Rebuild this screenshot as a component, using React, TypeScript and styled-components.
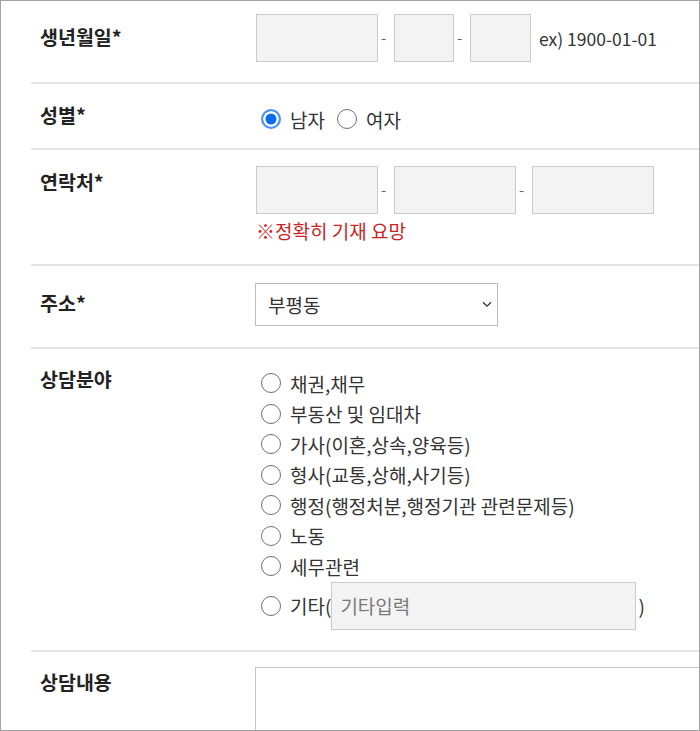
import React from "react";
import styled, { createGlobalStyle } from "styled-components";

const Global = createGlobalStyle`
  html, body { margin: 0; padding: 0; background: #fff; }
  body { font-family: "Noto Sans CJK KR", "Noto Sans", sans-serif; }
  * { box-sizing: border-box; }
`;

const Frame = styled.div`
  width: 700px;
  height: 731px;
  border: 1px solid #a3a3a3;
  overflow: hidden;
  background: #fff;
`;

const Form = styled.div`
  margin-left: 30px;
`;

const Row = styled.div<{ $last?: boolean }>`
  display: grid;
  grid-template-columns: 225px 1fr;
  align-items: start;
  border-bottom: ${(p) => (p.$last ? "none" : "2px solid #e4e4e4")};
`;

const Label = styled.div<{ $pt: number }>`
  padding: ${(p) => p.$pt}px 0 0 9px;
  font-size: 19.5px;
  font-weight: 700;
  line-height: 24px;
  color: #222;
`;

const Field = styled.div<{ $pt: number; $pb: number }>`
  padding: ${(p) => p.$pt}px 0 ${(p) => p.$pb}px 0;
  font-size: 19px;
  color: #333;
  min-width: 0;
`;

const Line = styled.div`
  display: flex;
  align-items: center;
  white-space: nowrap;
`;

const Box = styled.input<{ $w: number }>`
  width: ${(p) => p.$w}px;
  height: 48px;
  flex: none;
  border: 1px solid #cbcbcb;
  background: #f3f3f3;
  padding: 0 8px;
  font: inherit;
  color: #333;
  outline: none;
  &::placeholder { color: #7a7a7a; }
`;

const Dash = styled.span`
  width: 16px;
  flex: none;
  padding-left: 3px;
  font-size: 15px;
  color: #666;
  line-height: 20px;
`;

const Hint = styled.span`
  margin-left: 8px;
  font-size: 17.5px;
  color: #333;
`;

const Note = styled.div`
  margin-top: 4px;
  line-height: 26px;
  color: #cc1f26;
  white-space: nowrap;
`;

const Radio = styled.input.attrs({ type: "radio" })`
  appearance: none;
  -webkit-appearance: none;
  width: 20px;
  height: 20px;
  flex: none;
  margin: 0 9px 0 5px;
  border-radius: 50%;
  border: 1.5px solid #6f6f6f;
  background: #fff;
  &:checked {
    border: 2px solid #4a93f7;
    background: #0b6cf2;
    box-shadow: inset 0 0 0 2.5px #fff;
  }
`;

const Choice = styled.label<{ $h?: number }>`
  display: flex;
  align-items: center;
  height: ${(p) => p.$h ?? 24}px;
  white-space: nowrap;
  margin-right: 7px;
`;

const Inline = styled.div`
  display: flex;
  align-items: center;
`;

const Paren = styled.span`
  margin-left: 2px;
`;

const SelectWrap = styled.div`
  position: relative;
  width: 243px;
  height: 43px;
  margin-left: -1px;
`;

const Select = styled.select`
  appearance: none;
  -webkit-appearance: none;
  width: 100%;
  height: 100%;
  border: 1px solid #bdbdbd;
  background: #fff;
  padding: 0 30px 0 12px;
  font: inherit;
  color: #333;
  outline: none;
`;

const Chevron = styled.svg`
  position: absolute;
  right: 6px;
  top: 18px;
  pointer-events: none;
`;

const Area = styled.textarea`
  display: block;
  width: 480px;
  height: 140px;
  margin-left: -1px;
  border: 1px solid #c6c6c6;
  background: #fff;
  resize: none;
  font: inherit;
  outline: none;
`;

const fields = [
  "채권,채무",
  "부동산 및 임대차",
  "가사(이혼,상속,양육등)",
  "형사(교통,상해,사기등)",
  "행정(행정처분,행정기관 관련문제등)",
  "노동",
  "세무관련",
];

export default function App() {
  return (
    <>
      <Global />
      <Frame>
        <Form>
          <Row>
            <Label $pt={24}>생년월일*</Label>
            <Field $pt={13} $pb={20}>
              <Line>
                <Box $w={122} />
                <Dash>-</Dash>
                <Box $w={60} />
                <Dash>-</Dash>
                <Box $w={61} />
                <Hint>ex) 1900-01-01</Hint>
              </Line>
            </Field>
          </Row>
          <Row>
            <Label $pt={19}>성별*</Label>
            <Field $pt={23} $pb={17}>
              <Inline>
                <Choice>
                  <Radio name="sex" defaultChecked />
                  남자
                </Choice>
                <Choice>
                  <Radio name="sex" />
                  여자
                </Choice>
              </Inline>
            </Field>
          </Row>
          <Row>
            <Label $pt={20}>연락처*</Label>
            <Field $pt={16} $pb={20}>
              <Line>
                <Box $w={122} />
                <Dash>-</Dash>
                <Box $w={122} />
                <Dash>-</Dash>
                <Box $w={122} />
              </Line>
              <Note>※정확히 기재 요망</Note>
            </Field>
          </Row>
          <Row>
            <Label $pt={25}>주소*</Label>
            <Field $pt={17} $pb={21}>
              <SelectWrap>
                <Select defaultValue="부평동">
                  <option>부평동</option>
                </Select>
                <Chevron width="10" height="7" viewBox="0 0 10 7">
                  <path d="M1 1.2 L5 5.2 L9 1.2" fill="none" stroke="#333" strokeWidth="1.3" />
                </Chevron>
              </SelectWrap>
            </Field>
          </Row>
          <Row>
            <Label $pt={18}>상담분야</Label>
            <Field $pt={19} $pb={20}>
              {fields.map((f) => (
                <Choice key={f} $h={30.5}>
                  <Radio name="field" />
                  {f}
                </Choice>
              ))}
              <Choice $h={48}>
                <Radio name="field" />
                기타(
                <Box $w={305} placeholder="기타입력" />
                <Paren>)</Paren>
              </Choice>
            </Field>
          </Row>
          <Row $last>
            <Label $pt={18}>상담내용</Label>
            <Field $pt={15} $pb={0}>
              <Area />
            </Field>
          </Row>
        </Form>
      </Frame>
    </>
  );
}
